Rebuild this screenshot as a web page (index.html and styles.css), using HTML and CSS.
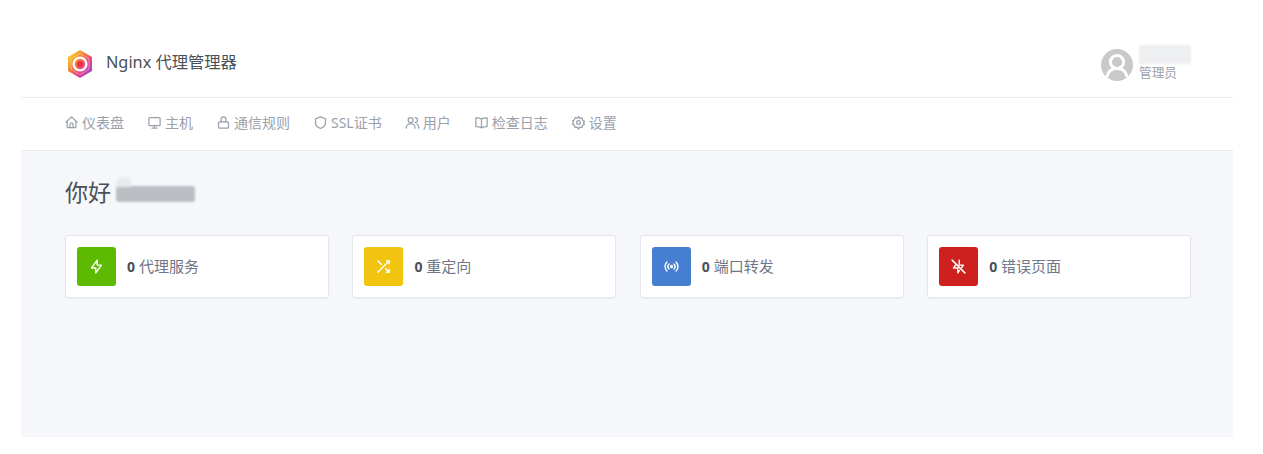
FILE: index.html
```html
<!DOCTYPE html>
<html lang="zh">
<head>
    <meta charset="UTF-8">
    <title>Nginx 代理管理器</title>
    <link rel="stylesheet" href="styles.css">
</head>
<body>
    <div class="page">
        <header class="topbar">
            <div class="brand">
                <svg class="brand-logo" viewBox="0 0 28 30">
                    <defs>
                        <linearGradient id="logoGrad" x1="0.1" y1="0.1" x2="0.9" y2="0.9">
                            <stop offset="0" stop-color="#fbd31f"/>
                            <stop offset="0.4" stop-color="#f4793a"/>
                            <stop offset="0.7" stop-color="#e8418f"/>
                            <stop offset="1" stop-color="#9b45c4"/>
                        </linearGradient>
                    </defs>
                    <path d="M14 1 26 8v14l-12 7-12-7V8z" fill="url(#logoGrad)"/>
                    <path d="M14 4.500 23 9.700v10.600L14 25.500 5 20.300V9.700z" fill="none" stroke="#fff" stroke-opacity="0.35" stroke-width="1"/>
                    <circle cx="14" cy="15" r="6.400" fill="none" stroke="#fff" stroke-width="2.400"/>
                    <circle cx="14" cy="15" r="3.100" fill="#ee2f4c"/>
                </svg>
                <span class="brand-name">Nginx 代理管理器</span>
            </div>
            <div class="user">
                <svg class="avatar" viewBox="0 0 32 32">
                    <circle cx="16" cy="16" r="16" fill="#c9c9c9"/>
                    <circle cx="16" cy="13" r="6.600" fill="none" stroke="#fff" stroke-width="3"/>
                    <path d="M6 28c1-6 5-8.500 10-8.500S25 22 26 28" fill="none" stroke="#fff" stroke-width="3"/>
                </svg>
                <div class="user-info">
                    <div class="user-name-mask"></div>
                    <div class="user-role">管理员</div>
                </div>
            </div>
        </header>

        <nav class="nav">
            <a class="nav-item" href="#">
                <svg class="nav-icon" viewBox="0 0 24 24"><path d="M3 11.500 12 3l9 8.500"/><path d="M5 10v10h14V10"/><path d="M9.500 20v-5a2.500 2.500 0 0 1 5 0v5"/></svg>
                仪表盘
            </a>
            <a class="nav-item" href="#">
                <svg class="nav-icon" viewBox="0 0 24 24"><rect x="3" y="4" width="18" height="13" rx="1.500"/><path d="M8 21h8M12 17v4"/></svg>
                主机
            </a>
            <a class="nav-item" href="#">
                <svg class="nav-icon" viewBox="0 0 24 24"><rect x="4" y="11" width="16" height="10" rx="2"/><path d="M8 11V7a4 4 0 0 1 8 0v4"/></svg>
                通信规则
            </a>
            <a class="nav-item" href="#">
                <svg class="nav-icon" viewBox="0 0 24 24"><path d="M12 3l8 3v6c0 5-3.500 8-8 9.500C7.500 20 4 17 4 12V6z"/></svg>
                SSL证书
            </a>
            <a class="nav-item" href="#">
                <svg class="nav-icon" viewBox="0 0 24 24"><circle cx="9" cy="8" r="4"/><path d="M2 21v-1a6 6 0 0 1 6-6h2a6 6 0 0 1 6 6v1"/><path d="M16 4a4 4 0 0 1 0 8M19 14.500a6 6 0 0 1 3 5.500v1"/></svg>
                用户
            </a>
            <a class="nav-item" href="#">
                <svg class="nav-icon" viewBox="0 0 24 24"><path d="M12 6.500C10 5 7 4.500 3 4.500v14c4 0 7 .5 9 2 2-1.500 5-2 9-2v-14c-4 0-7 .5-9 2z"/><path d="M12 6.500v14"/></svg>
                检查日志
            </a>
            <a class="nav-item" href="#">
                <svg class="nav-icon" viewBox="0 0 24 24"><circle cx="12" cy="12" r="3"/><path d="M12 2.500l2 3 3.500-.8 1 3.500 3 1.800-1.500 2.500 1.500 2.500-3 1.800-1 3.500-3.500-.8-2 3-2-3-3.500.8-1-3.500-3-1.800L4 12 2.500 9.500l3-1.800 1-3.500 3.500.8z"/></svg>
                设置
            </a>
        </nav>

        <main class="content">
            <h1 class="greeting">你好<span class="greeting-mask"></span></h1>
            <div class="stats">
                <div class="stat-card">
                    <div class="stat-icon stat-green">
                        <svg viewBox="0 0 24 24"><path d="M13 3v7h6l-8 11v-7H5z"/></svg>
                    </div>
                    <div class="stat-text"><b>0</b> 代理服务</div>
                </div>
                <div class="stat-card">
                    <div class="stat-icon stat-yellow">
                        <svg viewBox="0 0 24 24"><path d="M16 4h4v4M4 20 20 4M20 16v4h-4M15 15l5 5M4 4l5 5"/></svg>
                    </div>
                    <div class="stat-text"><b>0</b> 重定向</div>
                </div>
                <div class="stat-card">
                    <div class="stat-icon stat-blue">
                        <svg viewBox="0 0 24 24"><circle cx="12" cy="12" r="1.500"/><path d="M8.500 8.500a5 5 0 0 0 0 7M15.500 8.500a5 5 0 0 1 0 7M5.500 5.500a9.500 9.500 0 0 0 0 13M18.500 5.500a9.500 9.500 0 0 1 0 13"/></svg>
                    </div>
                    <div class="stat-text"><b>0</b> 端口转发</div>
                </div>
                <div class="stat-card">
                    <div class="stat-icon stat-red">
                        <svg viewBox="0 0 24 24"><path d="M3 3l18 18M13 3v7h6l-2.500 3.500M13.500 17.500 11 21v-7H5l3.500-5"/></svg>
                    </div>
                    <div class="stat-text"><b>0</b> 错误页面</div>
                </div>
            </div>
        </main>
    </div>
</body>
</html>
```

FILE: styles.css
```css
* {
    margin: 0;
    padding: 0;
    box-sizing: border-box;
}

body {
    background: #fff;
    color: #495057;
    font-family: "Noto Sans", "Noto Sans CJK SC", sans-serif;
    font-size: 14px;
}

.page {
    margin: 0 30px 18px 21px;
}

/* header */
.topbar {
    height: 98px;
    padding: 33px 42px 0 44px;
    display: flex;
    justify-content: space-between;
    align-items: flex-start;
    border-bottom: 1px solid #e9ecef;
}

.brand {
    display: flex;
    align-items: center;
    gap: 12px;
    height: 58px;
}

.brand-logo {
    width: 28px;
    height: 30px;
    margin: 3px 0 0 1px;
}

.brand-name {
    font-size: 16.300px;
    color: #495057;
    margin-top: -3px;
}

.user {
    display: flex;
    gap: 6px;
    margin-top: 12px;
}

.avatar {
    width: 32px;
    height: 32px;
    margin-top: 4px;
}

.user-info {
    width: 52px;
}

.user-name-mask {
    height: 19px;
    background: #eeeff1;
    filter: blur(1px);
}

.user-role {
    font-size: 12.700px;
    line-height: 17px;
    color: #9aa0ac;
}

/* nav */
.nav {
    height: 53px;
    padding: 0 44px 4px 43px;
    display: flex;
    align-items: center;
    gap: 23px;
    border-bottom: 1px solid #e9ecef;
}

.nav-item {
    display: flex;
    align-items: center;
    gap: 3px;
    color: #9aa0ac;
    text-decoration: none;
    font-size: 14px;
}

.nav-icon {
    width: 15px;
    height: 15px;
    fill: none;
    stroke: #9aa0ac;
    stroke-width: 2;
    stroke-linecap: round;
    stroke-linejoin: round;
}

/* main */
.content {
    height: 286px;
    padding: 21px 42px 0 44px;
    background: #f5f7fb;
}

.greeting {
    display: flex;
    align-items: center;
    height: 38px;
    font-size: 23px;
    font-weight: 400;
    color: #495057;
}

.greeting-mask {
    position: relative;
    width: 79px;
    height: 16px;
    margin: 6px 0 0 5px;
    border-radius: 3px;
    background: #bcbec3;
    filter: blur(1px);
}

/* pale smudge left by the redaction */
.greeting-mask::before {
    content: '';
    position: absolute;
    left: 0;
    top: -9px;
    width: 15px;
    height: 10px;
    border-radius: 8px 0 0 0;
    background: #e9eaee;
}

.stats {
    display: grid;
    grid-template-columns: repeat(4, 1fr);
    gap: 23.500px;
    margin-top: 25px;
}

.stat-card {
    height: 63px;
    padding: 11px;
    display: flex;
    align-items: center;
    gap: 11px;
    background: #fff;
    border: 1px solid #e4e7ec;
    border-radius: 3px;
    box-shadow: 0 1px 2px rgba(0, 0, 0, 0.05);
}

.stat-icon {
    width: 39px;
    height: 39px;
    display: flex;
    align-items: center;
    justify-content: center;
    border-radius: 3px;
}

.stat-icon svg {
    width: 17px;
    height: 17px;
    fill: none;
    stroke: #fff;
    stroke-width: 2;
    stroke-linecap: round;
    stroke-linejoin: round;
}

.stat-green { background: #5eba00; }
.stat-yellow { background: #f1c40f; }
.stat-blue { background: #467fcf; }
.stat-red { background: #cd201f; }

.stat-text {
    font-size: 15px;
    color: #6e7687;
    margin-top: -3px;
}

.stat-text b {
    font-size: 14px;
    font-weight: 700;
    color: #495057;
}
```
